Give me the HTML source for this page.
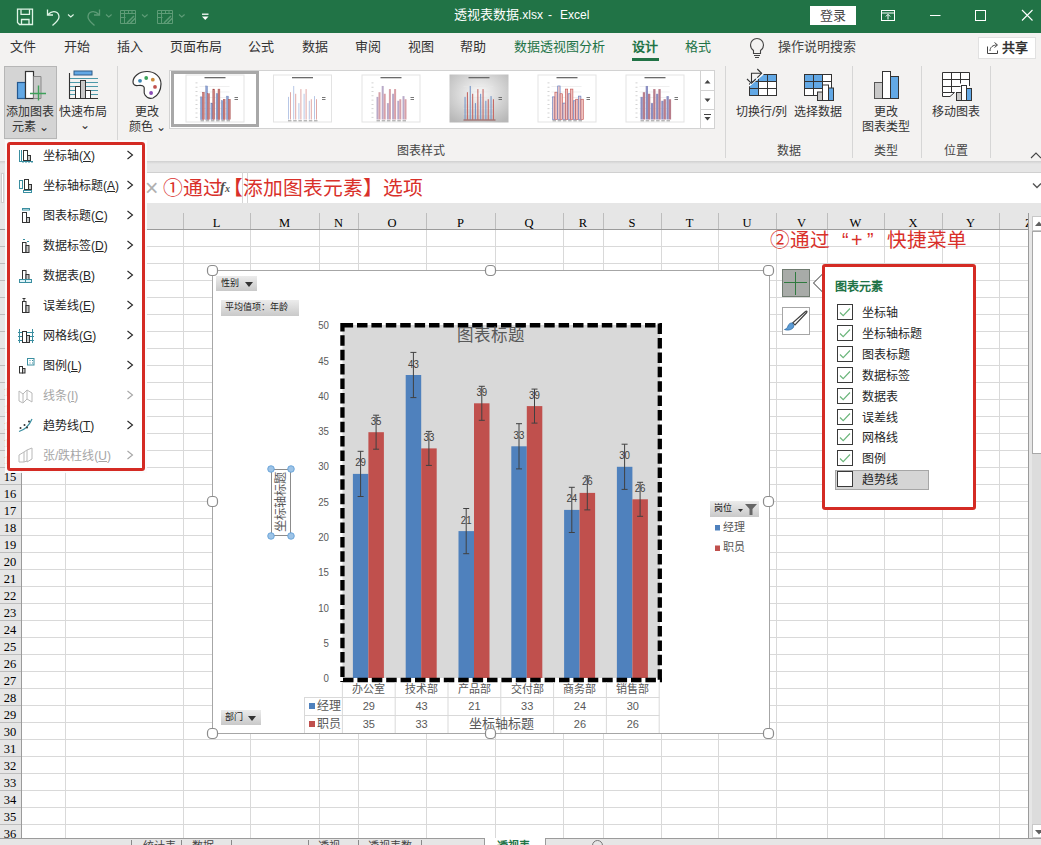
<!DOCTYPE html><html lang="zh-CN"><head><meta charset="utf-8"><style>
*{margin:0;padding:0;box-sizing:border-box}
body{width:1041px;height:845px;overflow:hidden;position:relative;background:#fff;font-family:"Liberation Sans",sans-serif;color:#262626}
.ab{position:absolute}
.t{position:absolute;white-space:nowrap;line-height:1}
</style></head><body>
<div class="ab" style="left:0;top:0;width:1041px;height:33px;background:#217346"></div>
<div class="t" style="left:454px;top:8px;font-size:13px;color:#fff">透视表数据<span style="font-size:12px">.xlsx</span></div>
<div class="t" style="left:548px;top:9px;font-size:12px;color:#fff">-</div>
<div class="t" style="left:560px;top:9px;font-size:12px;color:#fff">Excel</div>
<div class="ab" style="left:810px;top:6px;width:46px;height:19px;background:#fff"></div>
<div class="t" style="left:820px;top:9px;font-size:13px;color:#444">登录</div>
<div class="ab" style="left:0;top:33px;width:1041px;height:128px;background:#f3f2f1"></div>
<div class="t" style="left:10px;top:40px;font-size:13px;color:#333">文件</div>
<div class="t" style="left:64px;top:40px;font-size:13px;color:#333">开始</div>
<div class="t" style="left:117px;top:40px;font-size:13px;color:#333">插入</div>
<div class="t" style="left:170px;top:40px;font-size:13px;color:#333">页面布局</div>
<div class="t" style="left:248px;top:40px;font-size:13px;color:#333">公式</div>
<div class="t" style="left:302px;top:40px;font-size:13px;color:#333">数据</div>
<div class="t" style="left:355px;top:40px;font-size:13px;color:#333">审阅</div>
<div class="t" style="left:408px;top:40px;font-size:13px;color:#333">视图</div>
<div class="t" style="left:460px;top:40px;font-size:13px;color:#333">帮助</div>
<div class="t" style="left:514px;top:40px;font-size:13px;color:#217346">数据透视图分析</div>
<div class="t" style="left:632px;top:40px;font-size:13px;color:#217346;font-weight:bold">设计</div>
<div class="ab" style="left:632px;top:58px;width:27px;height:3px;background:#217346"></div>
<div class="t" style="left:685px;top:40px;font-size:13px;color:#217346">格式</div>
<div class="t" style="left:778px;top:40px;font-size:13px;color:#444">操作说明搜索</div>
<div class="ab" style="left:978px;top:37px;width:58px;height:22px;background:#fff;border:1px solid #e1e1e1"></div>
<div class="t" style="left:1002px;top:41px;font-size:13px;color:#333;font-weight:bold">共享</div>
<div class="ab" style="left:4px;top:66px;width:53px;height:73px;background:#d4d4d4;border:1px solid #b6b6b6"></div>
<div class="t" style="left:6px;top:106px;font-size:12px;color:#333">添加图表</div>
<div class="t" style="left:12px;top:121px;font-size:12px;color:#333">元素 ⌄</div>
<div class="t" style="left:59px;top:106px;font-size:12px;color:#333">快速布局</div>
<div class="t" style="left:80px;top:119px;font-size:12px;color:#333">⌄</div>
<div class="ab" style="left:117px;top:66px;width:1px;height:92px;background:#d6d6d6"></div>
<div class="t" style="left:135px;top:106px;font-size:12px;color:#333">更改</div>
<div class="t" style="left:129px;top:121px;font-size:12px;color:#333">颜色 ⌄</div>
<div class="ab" style="left:169px;top:70px;width:546px;height:59px;background:#fff;border:1px solid #d2d2d2"></div>
<div class="ab" style="left:171px;top:71px;width:88px;height:56px;border:3px solid #a8a8a8;background:#fff"></div>
<div class="t" style="left:397px;top:145px;font-size:12px;color:#444">图表样式</div>
<div class="ab" style="left:725px;top:66px;width:1px;height:92px;background:#d6d6d6"></div>
<div class="t" style="left:736px;top:106px;font-size:12px;color:#333">切换行/列</div>
<div class="t" style="left:794px;top:106px;font-size:12px;color:#333">选择数据</div>
<div class="t" style="left:777px;top:145px;font-size:12px;color:#444">数据</div>
<div class="ab" style="left:852px;top:66px;width:1px;height:92px;background:#d6d6d6"></div>
<div class="t" style="left:874px;top:106px;font-size:12px;color:#333">更改</div>
<div class="t" style="left:862px;top:121px;font-size:12px;color:#333">图表类型</div>
<div class="t" style="left:874px;top:145px;font-size:12px;color:#444">类型</div>
<div class="ab" style="left:921px;top:66px;width:1px;height:92px;background:#d6d6d6"></div>
<div class="t" style="left:932px;top:106px;font-size:12px;color:#333">移动图表</div>
<div class="t" style="left:944px;top:145px;font-size:12px;color:#444">位置</div>
<div class="ab" style="left:990px;top:66px;width:1px;height:92px;background:#d6d6d6"></div>
<svg class="ab" style="left:0;top:0" width="220" height="32" fill="none" stroke-width="1.3"><path d="M17.5 9.2h15v15.3h-13l-2-2z" stroke="#dff5e6"/><path d="M21 9.5v4.8h8.5V9.5M21.5 24.5v-5h7.5v5" stroke="#dff5e6"/><path d="M48 14.5c5-5 11-3 11 2.5 0 3-3 5.5-6.5 8.5" stroke="#dff5e6"/><path d="M47.5 9.5v5.5h5.5" stroke="#dff5e6"/><path d="M68 14.5l2.8 2.5 2.8-2.5" stroke="#dff5e6" stroke-width="1.1"/><path d="M99 14.5c-5-5-11-3-11 2.5 0 3 3 5.5 6.5 8.5" stroke="#5e9c77"/><path d="M99.5 9.5v5.5h-5.5" stroke="#5e9c77"/><path d="M106 14.5l2.8 2.5 2.8-2.5" stroke="#5e9c77" stroke-width="1.1"/><path d="M120.5 10.5h15v13h-15zM120.5 13.5h15M120.5 17.5h5M124.5 10.5v13M128.5 10.5v3M132 10.5v3" stroke="#5e9c77" stroke-width="1"/><path d="M127 23l7-7M130.5 23l5-5" stroke="#5e9c77" stroke-width="1.5"/><path d="M142 14.5l2.8 2.5 2.8-2.5" stroke="#5e9c77" stroke-width="1.1"/><path d="M157.5 10.5h15v13h-15zM157.5 13.5h15M157.5 17.5h5M161.5 10.5v13M165.5 10.5v3M169 10.5v3" stroke="#5e9c77" stroke-width="1"/><path d="M164 23l7-7M167.5 23l5-5" stroke="#5e9c77" stroke-width="1.5"/><path d="M179 14.5l2.8 2.5 2.8-2.5" stroke="#5e9c77" stroke-width="1.1"/><path d="M202 14.2h6.5" stroke="#fff" stroke-width="1.3"/><path d="M202 16.5h6.5l-3.25 3.5z" fill="#fff" stroke="none"/></svg>
<svg class="ab" style="left:860px;top:0" width="181" height="32" fill="none" stroke="#fff" stroke-width="1"><rect x="21.5" y="10.5" width="13" height="10"/><path d="M21.5 13h13M28 19.5v-5M25.8 16.5l2.2-2.2 2.2 2.2"/><path d="M70 15.5h10.5"/><rect x="115.5" y="10.5" width="10" height="10"/><path d="M162 10l10.5 10.5M172.5 10L162 20.5" stroke-width="1.1"/></svg>
<svg class="ab" style="left:748px;top:37px" width="18" height="22" fill="none" stroke="#444" stroke-width="1.1"><path d="M5.5 13.5c-1.8-1.3-3-3.2-3-5.5a6.5 6.5 0 0 1 13 0c0 2.3-1.2 4.2-3 5.5v3h-7z"/><path d="M6 18.5h6M7 20.5h4"/></svg>
<svg class="ab" style="left:985px;top:40px" width="16" height="16" fill="none" stroke="#444" stroke-width="1"><path d="M2.5 6.5v7h10v-3"/><path d="M5 11c0-4 3-6 7-6M9.5 2.5l3 2.5-3 2.5"/></svg>
<svg class="ab" style="left:0;top:0" width="1041" height="161" stroke-width="1"><rect x="17.5" y="82.5" width="8" height="16" fill="#62a8e5" stroke="#24588f" stroke-width="1.2"/><rect x="25.5" y="71.5" width="8" height="27" fill="#fff" stroke="#333" stroke-width="1.2"/><path d="M33.5 76.5h7.5v22h-7.5" fill="#c8c8c8" stroke="#8a8a8a"/><path d="M30 93.5h16M38.5 85.5v15" stroke="#3da05a" stroke-width="1.4"/><rect x="74" y="71" width="18" height="4" fill="#62a8e5" stroke="#2d5b88"/><path d="M70 78.5h28" stroke="#3a8ea0" stroke-width=".9"/><path d="M70 82.5h28" stroke="#3a8ea0" stroke-width=".9"/><path d="M70 86.5h28" stroke="#3a8ea0" stroke-width=".9"/><path d="M70 90.5h28" stroke="#3a8ea0" stroke-width=".9"/><path d="M70 94.5h28" stroke="#3a8ea0" stroke-width=".9"/><rect x="75.5" y="86.5" width="5" height="12" fill="#fff" stroke="#333"/><rect x="80.5" y="80.5" width="5" height="18" fill="#c8c8c8" stroke="#333"/><rect x="85.5" y="90.5" width="5" height="8" fill="#fff" stroke="#333"/><path d="M69.5 73v25.5h28.5" stroke="#333" stroke-width="1.1" fill="none"/><path d="M147 71.5c-8 0-14 5-14 10.5 0 3 2.5 4 5 3.5 3-.5 5-.5 6 1.5s-1 5 1 8 5 4 8 3c5-2 8-8 8-14 0-7-6-12.5-14-12.5z" fill="#fff" stroke="#333" stroke-width="1.2"/><circle cx="140" cy="80.8" r="1.9" fill="#3b86b0"/><circle cx="146.2" cy="78" r="1.9" fill="#3aa35a"/><circle cx="152.8" cy="79.7" r="1.9" fill="#c98a3b"/><circle cx="155" cy="86.9" r="1.9" fill="#c0504d"/><circle cx="151.1" cy="93" r="1.9" fill="#8a4db5"/><path d="M700.5 70v58.5M700.5 90.5h14M700.5 109.5h14" stroke="#d2d2d2"/><path d="M704.5 83.5l3-3.5 3 3.5z" fill="#444"/><path d="M704.5 98.5l3 3.5 3-3.5z" fill="#444"/><path d="M704 114.5h7" stroke="#444"/><path d="M704.5 117l3 3.5 3-3.5z" fill="#444"/><rect x="186.0" y="75.0" width="58" height="47" fill="#fff" stroke="#e3e3e3"/><rect x="204.5" y="77.0" width="21" height="1.3" fill="#6a6a6a"/><line x1="199.5" y1="86.5" x2="229.5" y2="86.5" stroke="#e6e6e6" stroke-width=".6"/><line x1="199.5" y1="92.0" x2="229.5" y2="92.0" stroke="#e6e6e6" stroke-width=".6"/><line x1="199.5" y1="97.5" x2="229.5" y2="97.5" stroke="#e6e6e6" stroke-width=".6"/><line x1="199.5" y1="103.0" x2="229.5" y2="103.0" stroke="#e6e6e6" stroke-width=".6"/><line x1="199.5" y1="108.5" x2="229.5" y2="108.5" stroke="#e6e6e6" stroke-width=".6"/><line x1="199.5" y1="114.0" x2="229.5" y2="114.0" stroke="#e6e6e6" stroke-width=".6"/><rect x="195.5" y="82.5" width="2" height=".8" fill="#c8c8c8"/><rect x="195.5" y="86.8" width="2" height=".8" fill="#c8c8c8"/><rect x="195.5" y="91.1" width="2" height=".8" fill="#c8c8c8"/><rect x="195.5" y="95.4" width="2" height=".8" fill="#c8c8c8"/><rect x="195.5" y="99.7" width="2" height=".8" fill="#c8c8c8"/><rect x="195.5" y="104.0" width="2" height=".8" fill="#c8c8c8"/><rect x="195.5" y="108.3" width="2" height=".8" fill="#c8c8c8"/><rect x="195.5" y="112.6" width="2" height=".8" fill="#c8c8c8"/><rect x="195.5" y="116.9" width="2" height=".8" fill="#c8c8c8"/><rect x="234.5" y="97.0" width="3.5" height=".8" fill="#555"/><rect x="234.5" y="99.0" width="3.5" height=".8" fill="#555"/><rect x="200.5" y="96.88" width="1.9" height="22.62" fill="#8ea4d2" stroke="#6f82b8" stroke-width=".4"/><rect x="202.4" y="92.2" width="1.9" height="27.3" fill="#c97d7b" stroke="#a94f4d" stroke-width=".4"/><rect x="205.7" y="85.96000000000001" width="1.9" height="33.54" fill="#8ea4d2" stroke="#6f82b8" stroke-width=".4"/><rect x="207.6" y="93.75999999999999" width="1.9" height="25.740000000000002" fill="#c97d7b" stroke="#a94f4d" stroke-width=".4"/><rect x="210.9" y="103.12" width="1.9" height="16.38" fill="#8ea4d2" stroke="#6f82b8" stroke-width=".4"/><rect x="212.8" y="89.08" width="1.9" height="30.42" fill="#c97d7b" stroke="#a94f4d" stroke-width=".4"/><rect x="216.1" y="93.75999999999999" width="1.9" height="25.740000000000002" fill="#8ea4d2" stroke="#6f82b8" stroke-width=".4"/><rect x="218.0" y="89.08" width="1.9" height="30.42" fill="#c97d7b" stroke="#a94f4d" stroke-width=".4"/><rect x="221.3" y="100.78" width="1.9" height="18.72" fill="#8ea4d2" stroke="#6f82b8" stroke-width=".4"/><rect x="223.20000000000002" y="99.22" width="1.9" height="20.28" fill="#c97d7b" stroke="#a94f4d" stroke-width=".4"/><rect x="226.5" y="96.1" width="1.9" height="23.400000000000002" fill="#8ea4d2" stroke="#6f82b8" stroke-width=".4"/><rect x="228.4" y="99.22" width="1.9" height="20.28" fill="#c97d7b" stroke="#a94f4d" stroke-width=".4"/><rect x="200.5" y="120.3" width="3.5" height="1" fill="#9a9a9a"/><rect x="205.7" y="120.3" width="3.5" height="1" fill="#9a9a9a"/><rect x="210.9" y="120.3" width="3.5" height="1" fill="#9a9a9a"/><rect x="216.1" y="120.3" width="3.5" height="1" fill="#9a9a9a"/><rect x="221.3" y="120.3" width="3.5" height="1" fill="#9a9a9a"/><rect x="226.5" y="120.3" width="3.5" height="1" fill="#9a9a9a"/><rect x="273.5" y="75.0" width="58" height="47" fill="#fff" stroke="#e3e3e3"/><rect x="292" y="77.0" width="21" height="1.3" fill="#6a6a6a"/><rect x="322" y="97.0" width="3.5" height=".8" fill="#555"/><rect x="322" y="99.0" width="3.5" height=".8" fill="#555"/><rect x="288.0" y="96.88" width="1.0" height="22.62" fill="#b7c7e6"/><rect x="290.0" y="92.2" width="1.0" height="27.3" fill="#e0a8a6"/><rect x="293.2" y="85.96000000000001" width="1.0" height="33.54" fill="#b7c7e6"/><rect x="295.2" y="93.75999999999999" width="1.0" height="25.740000000000002" fill="#e0a8a6"/><rect x="298.4" y="103.12" width="1.0" height="16.38" fill="#b7c7e6"/><rect x="300.4" y="89.08" width="1.0" height="30.42" fill="#e0a8a6"/><rect x="303.6" y="93.75999999999999" width="1.0" height="25.740000000000002" fill="#b7c7e6"/><rect x="305.6" y="89.08" width="1.0" height="30.42" fill="#e0a8a6"/><rect x="308.8" y="100.78" width="1.0" height="18.72" fill="#b7c7e6"/><rect x="310.8" y="99.22" width="1.0" height="20.28" fill="#e0a8a6"/><rect x="314.0" y="96.1" width="1.0" height="23.400000000000002" fill="#b7c7e6"/><rect x="316.0" y="99.22" width="1.0" height="20.28" fill="#e0a8a6"/><rect x="288.0" y="120.3" width="3.5" height="1" fill="#9a9a9a"/><rect x="293.2" y="120.3" width="3.5" height="1" fill="#9a9a9a"/><rect x="298.4" y="120.3" width="3.5" height="1" fill="#9a9a9a"/><rect x="303.6" y="120.3" width="3.5" height="1" fill="#9a9a9a"/><rect x="308.8" y="120.3" width="3.5" height="1" fill="#9a9a9a"/><rect x="314.0" y="120.3" width="3.5" height="1" fill="#9a9a9a"/><rect x="362.0" y="75.0" width="58" height="47" fill="#fff" stroke="#e3e3e3"/><rect x="380.5" y="77.0" width="21" height="1.3" fill="#6a6a6a"/><rect x="371.5" y="82.5" width="2" height=".8" fill="#c8c8c8"/><rect x="371.5" y="86.8" width="2" height=".8" fill="#c8c8c8"/><rect x="371.5" y="91.1" width="2" height=".8" fill="#c8c8c8"/><rect x="371.5" y="95.4" width="2" height=".8" fill="#c8c8c8"/><rect x="371.5" y="99.7" width="2" height=".8" fill="#c8c8c8"/><rect x="371.5" y="104.0" width="2" height=".8" fill="#c8c8c8"/><rect x="371.5" y="108.3" width="2" height=".8" fill="#c8c8c8"/><rect x="371.5" y="112.6" width="2" height=".8" fill="#c8c8c8"/><rect x="371.5" y="116.9" width="2" height=".8" fill="#c8c8c8"/><rect x="410.5" y="97.0" width="3.5" height=".8" fill="#555"/><rect x="410.5" y="99.0" width="3.5" height=".8" fill="#555"/><rect x="376.5" y="96.88" width="2.0" height="22.62" fill="#b9aac8"/><rect x="378.5" y="92.2" width="2.0" height="27.3" fill="#d8a0a8"/><rect x="381.7" y="85.96000000000001" width="2.0" height="33.54" fill="#b9aac8"/><rect x="383.7" y="93.75999999999999" width="2.0" height="25.740000000000002" fill="#d8a0a8"/><rect x="386.9" y="103.12" width="2.0" height="16.38" fill="#b9aac8"/><rect x="388.9" y="89.08" width="2.0" height="30.42" fill="#d8a0a8"/><rect x="392.1" y="93.75999999999999" width="2.0" height="25.740000000000002" fill="#b9aac8"/><rect x="394.1" y="89.08" width="2.0" height="30.42" fill="#d8a0a8"/><rect x="397.3" y="100.78" width="2.0" height="18.72" fill="#b9aac8"/><rect x="399.3" y="99.22" width="2.0" height="20.28" fill="#d8a0a8"/><rect x="402.5" y="96.1" width="2.0" height="23.400000000000002" fill="#b9aac8"/><rect x="404.5" y="99.22" width="2.0" height="20.28" fill="#d8a0a8"/><rect x="376.5" y="120.3" width="3.5" height="1" fill="#9a9a9a"/><rect x="381.7" y="120.3" width="3.5" height="1" fill="#9a9a9a"/><rect x="386.9" y="120.3" width="3.5" height="1" fill="#9a9a9a"/><rect x="392.1" y="120.3" width="3.5" height="1" fill="#9a9a9a"/><rect x="397.3" y="120.3" width="3.5" height="1" fill="#9a9a9a"/><rect x="402.5" y="120.3" width="3.5" height="1" fill="#9a9a9a"/><defs><radialGradient id="g4" cx="50%" cy="40%" r="70%"><stop offset="0" stop-color="#fafafa"/><stop offset="1" stop-color="#b8b8b8"/></radialGradient></defs><rect x="449.5" y="74.5" width="59" height="48" fill="url(#g4)"/><rect x="468.5" y="77.0" width="21" height="1.3" fill="#6a6a6a"/><line x1="463.5" y1="86.5" x2="493.5" y2="86.5" stroke="#e6e6e6" stroke-width=".6"/><line x1="463.5" y1="92.0" x2="493.5" y2="92.0" stroke="#e6e6e6" stroke-width=".6"/><line x1="463.5" y1="97.5" x2="493.5" y2="97.5" stroke="#e6e6e6" stroke-width=".6"/><line x1="463.5" y1="103.0" x2="493.5" y2="103.0" stroke="#e6e6e6" stroke-width=".6"/><line x1="463.5" y1="108.5" x2="493.5" y2="108.5" stroke="#e6e6e6" stroke-width=".6"/><line x1="463.5" y1="114.0" x2="493.5" y2="114.0" stroke="#e6e6e6" stroke-width=".6"/><rect x="498.5" y="97.0" width="3.5" height=".8" fill="#555"/><rect x="498.5" y="99.0" width="3.5" height=".8" fill="#555"/><rect x="464.5" y="96.88" width="1.1" height="22.62" fill="#7897c8"/><rect x="466.9" y="92.2" width="1.1" height="27.3" fill="#c66a66"/><rect x="469.7" y="85.96000000000001" width="1.1" height="33.54" fill="#7897c8"/><rect x="472.09999999999997" y="93.75999999999999" width="1.1" height="25.740000000000002" fill="#c66a66"/><rect x="474.9" y="103.12" width="1.1" height="16.38" fill="#7897c8"/><rect x="477.29999999999995" y="89.08" width="1.1" height="30.42" fill="#c66a66"/><rect x="480.1" y="93.75999999999999" width="1.1" height="25.740000000000002" fill="#7897c8"/><rect x="482.5" y="89.08" width="1.1" height="30.42" fill="#c66a66"/><rect x="485.3" y="100.78" width="1.1" height="18.72" fill="#7897c8"/><rect x="487.7" y="99.22" width="1.1" height="20.28" fill="#c66a66"/><rect x="490.5" y="96.1" width="1.1" height="23.400000000000002" fill="#7897c8"/><rect x="492.9" y="99.22" width="1.1" height="20.28" fill="#c66a66"/><line x1="463.5" y1="120.0" x2="495.5" y2="120.0" stroke="#8b3a38" stroke-width=".8"/><rect x="538.0" y="75.0" width="58" height="47" fill="#fff" stroke="#e3e3e3"/><rect x="556.5" y="77.0" width="21" height="1.3" fill="#6a6a6a"/><line x1="551.5" y1="86.5" x2="581.5" y2="86.5" stroke="#e6e6e6" stroke-width=".6"/><line x1="551.5" y1="92.0" x2="581.5" y2="92.0" stroke="#e6e6e6" stroke-width=".6"/><line x1="551.5" y1="97.5" x2="581.5" y2="97.5" stroke="#e6e6e6" stroke-width=".6"/><line x1="551.5" y1="103.0" x2="581.5" y2="103.0" stroke="#e6e6e6" stroke-width=".6"/><line x1="551.5" y1="108.5" x2="581.5" y2="108.5" stroke="#e6e6e6" stroke-width=".6"/><line x1="551.5" y1="114.0" x2="581.5" y2="114.0" stroke="#e6e6e6" stroke-width=".6"/><rect x="547.5" y="82.5" width="2" height=".8" fill="#c8c8c8"/><rect x="547.5" y="86.8" width="2" height=".8" fill="#c8c8c8"/><rect x="547.5" y="91.1" width="2" height=".8" fill="#c8c8c8"/><rect x="547.5" y="95.4" width="2" height=".8" fill="#c8c8c8"/><rect x="547.5" y="99.7" width="2" height=".8" fill="#c8c8c8"/><rect x="547.5" y="104.0" width="2" height=".8" fill="#c8c8c8"/><rect x="547.5" y="108.3" width="2" height=".8" fill="#c8c8c8"/><rect x="547.5" y="112.6" width="2" height=".8" fill="#c8c8c8"/><rect x="547.5" y="116.9" width="2" height=".8" fill="#c8c8c8"/><rect x="586.5" y="97.0" width="3.5" height=".8" fill="#555"/><rect x="586.5" y="99.0" width="3.5" height=".8" fill="#555"/><rect x="552.5" y="96.88" width="2.4" height="22.62" fill="#e8c6c8" stroke="#5b79c0" stroke-width=".6"/><rect x="554.9" y="92.2" width="2.4" height="27.3" fill="#efc2c0" stroke="#c0504d" stroke-width=".6"/><rect x="557.7" y="85.96000000000001" width="2.4" height="33.54" fill="#e8c6c8" stroke="#5b79c0" stroke-width=".6"/><rect x="560.1" y="93.75999999999999" width="2.4" height="25.740000000000002" fill="#efc2c0" stroke="#c0504d" stroke-width=".6"/><rect x="562.9" y="103.12" width="2.4" height="16.38" fill="#e8c6c8" stroke="#5b79c0" stroke-width=".6"/><rect x="565.3" y="89.08" width="2.4" height="30.42" fill="#efc2c0" stroke="#c0504d" stroke-width=".6"/><rect x="568.1" y="93.75999999999999" width="2.4" height="25.740000000000002" fill="#e8c6c8" stroke="#5b79c0" stroke-width=".6"/><rect x="570.5" y="89.08" width="2.4" height="30.42" fill="#efc2c0" stroke="#c0504d" stroke-width=".6"/><rect x="573.3" y="100.78" width="2.4" height="18.72" fill="#e8c6c8" stroke="#5b79c0" stroke-width=".6"/><rect x="575.6999999999999" y="99.22" width="2.4" height="20.28" fill="#efc2c0" stroke="#c0504d" stroke-width=".6"/><rect x="578.5" y="96.1" width="2.4" height="23.400000000000002" fill="#e8c6c8" stroke="#5b79c0" stroke-width=".6"/><rect x="580.9" y="99.22" width="2.4" height="20.28" fill="#efc2c0" stroke="#c0504d" stroke-width=".6"/><rect x="552.5" y="120.3" width="3.5" height="1" fill="#9a9a9a"/><rect x="557.7" y="120.3" width="3.5" height="1" fill="#9a9a9a"/><rect x="562.9" y="120.3" width="3.5" height="1" fill="#9a9a9a"/><rect x="568.1" y="120.3" width="3.5" height="1" fill="#9a9a9a"/><rect x="573.3" y="120.3" width="3.5" height="1" fill="#9a9a9a"/><rect x="578.5" y="120.3" width="3.5" height="1" fill="#9a9a9a"/><rect x="626.0" y="75.0" width="58" height="47" fill="#fff" stroke="#e3e3e3"/><rect x="644.5" y="77.0" width="21" height="1.3" fill="#6a6a6a"/><line x1="639.5" y1="86.5" x2="669.5" y2="86.5" stroke="#e6e6e6" stroke-width=".6"/><line x1="639.5" y1="92.0" x2="669.5" y2="92.0" stroke="#e6e6e6" stroke-width=".6"/><line x1="639.5" y1="97.5" x2="669.5" y2="97.5" stroke="#e6e6e6" stroke-width=".6"/><line x1="639.5" y1="103.0" x2="669.5" y2="103.0" stroke="#e6e6e6" stroke-width=".6"/><line x1="639.5" y1="108.5" x2="669.5" y2="108.5" stroke="#e6e6e6" stroke-width=".6"/><line x1="639.5" y1="114.0" x2="669.5" y2="114.0" stroke="#e6e6e6" stroke-width=".6"/><rect x="635.5" y="82.5" width="2" height=".8" fill="#c8c8c8"/><rect x="635.5" y="86.8" width="2" height=".8" fill="#c8c8c8"/><rect x="635.5" y="91.1" width="2" height=".8" fill="#c8c8c8"/><rect x="635.5" y="95.4" width="2" height=".8" fill="#c8c8c8"/><rect x="635.5" y="99.7" width="2" height=".8" fill="#c8c8c8"/><rect x="635.5" y="104.0" width="2" height=".8" fill="#c8c8c8"/><rect x="635.5" y="108.3" width="2" height=".8" fill="#c8c8c8"/><rect x="635.5" y="112.6" width="2" height=".8" fill="#c8c8c8"/><rect x="635.5" y="116.9" width="2" height=".8" fill="#c8c8c8"/><rect x="674.5" y="97.0" width="3.5" height=".8" fill="#555"/><rect x="674.5" y="99.0" width="3.5" height=".8" fill="#555"/><rect x="640.5" y="96.88" width="2.3" height="22.62" fill="#8b8fc2"/><rect x="642.8" y="92.2" width="2.3" height="27.3" fill="#b87d8a"/><rect x="645.7" y="85.96000000000001" width="2.3" height="33.54" fill="#8b8fc2"/><rect x="648.0" y="93.75999999999999" width="2.3" height="25.740000000000002" fill="#b87d8a"/><rect x="650.9" y="103.12" width="2.3" height="16.38" fill="#8b8fc2"/><rect x="653.1999999999999" y="89.08" width="2.3" height="30.42" fill="#b87d8a"/><rect x="656.1" y="93.75999999999999" width="2.3" height="25.740000000000002" fill="#8b8fc2"/><rect x="658.4" y="89.08" width="2.3" height="30.42" fill="#b87d8a"/><rect x="661.3" y="100.78" width="2.3" height="18.72" fill="#8b8fc2"/><rect x="663.5999999999999" y="99.22" width="2.3" height="20.28" fill="#b87d8a"/><rect x="666.5" y="96.1" width="2.3" height="23.400000000000002" fill="#8b8fc2"/><rect x="668.8" y="99.22" width="2.3" height="20.28" fill="#b87d8a"/><rect x="640.5" y="120.3" width="3.5" height="1" fill="#9a9a9a"/><rect x="645.7" y="120.3" width="3.5" height="1" fill="#9a9a9a"/><rect x="650.9" y="120.3" width="3.5" height="1" fill="#9a9a9a"/><rect x="656.1" y="120.3" width="3.5" height="1" fill="#9a9a9a"/><rect x="661.3" y="120.3" width="3.5" height="1" fill="#9a9a9a"/><rect x="666.5" y="120.3" width="3.5" height="1" fill="#9a9a9a"/><rect x="749.5" y="74.5" width="27" height="21" fill="#fff" stroke="#333"/><path d="M749.5 74.5h27v7h-18v14h-9z" fill="#62a8e5" stroke="#333"/><path d="M758.5 74.5v21M767.5 74.5v21M749.5 81.5h27M749.5 88.5h27" stroke="#333"/><path d="M745 73V86.5L764 73z" fill="#f3f2f1"/><path d="M749 86L763.5 73.5" stroke="#fff" stroke-width="1.6"/><path d="M751.5 82.5V73.3h10" fill="none" stroke="#333" stroke-width="1.1"/><path d="M747 79l4.5 4.3 4.3-4.3M757.3 69l4.3 4.3-4.3 4.3" fill="none" stroke="#333" stroke-width="1.1"/><rect x="804.5" y="74.5" width="27" height="21" fill="#fff" stroke="#333"/><rect x="804.5" y="74.5" width="18" height="14" fill="#62a8e5" stroke="#333"/><path d="M813.5 74.5v21M822.5 74.5v21M804.5 81.5h27M804.5 88.5h27" stroke="#333"/><rect x="817.5" y="92" width="5" height="8.5" fill="#c8c8c8" stroke="#333"/><rect x="822.5" y="85" width="6" height="15.5" fill="#fff" stroke="#333"/><rect x="828.5" y="88" width="5" height="12.5" fill="#62a8e5" stroke="#333"/><rect x="874.5" y="82.5" width="8" height="16" fill="#c8c8c8" stroke="#555"/><rect x="882.5" y="71.5" width="8" height="27" fill="#fff" stroke="#333"/><rect x="890.5" y="76.5" width="8" height="22" fill="#62a8e5" stroke="#333"/><rect x="943" y="73" width="26" height="20" fill="#fff"/><path d="M942.5 92.5V72.5h27v13.5" fill="none" stroke="#333"/><path d="M942.5 79.5h27M942.5 86.5h18M951.5 72.5v20M960.5 72.5v11" stroke="#333"/><path d="M942.5 92.5h12l-4.5 4h-7.5z" fill="#fff" stroke="#333"/><rect x="956.5" y="92.5" width="5" height="8" fill="#c8c8c8" stroke="#333"/><rect x="961.5" y="85.5" width="5" height="15" fill="#fff" stroke="#333"/><rect x="966.5" y="88.5" width="5" height="12" fill="#62a8e5" stroke="#333"/><path d="M1031 158l5-5 5 5" fill="none" stroke="#444" stroke-width="1.1"/></svg>
<div class="ab" style="left:0;top:161px;width:1041px;height:42px;background:#e6e6e6"></div>
<div class="ab" style="left:0;top:161px;width:1041px;height:3px;background:linear-gradient(#cfcfcf,#e6e6e6)"></div>
<div class="ab" style="left:0;top:172px;width:1041px;height:32px;background:#fff;border-top:1px solid #d0d0d0;border-bottom:1px solid #c6c6c6"></div>
<div class="ab" style="left:0;top:172px;width:6px;height:31px;background:#e3e3e3"></div>
<div class="ab" style="left:1px;top:173px;width:3px;height:30px;background:#fff;border:1px solid #d0d0d0"></div>
<div class="ab" style="left:242px;top:172px;width:1px;height:31px;background:#d6d6d6"></div>
<div class="ab" style="left:247px;top:172px;width:1px;height:31px;background:#d6d6d6"></div>
<div class="ab" style="left:0;top:203px;width:1041px;height:26px;background:#e6e6e6"></div>
<svg class="ab" style="left:0;top:0" width="1041" height="845"><line x1="22" y1="229.5" x2="1028" y2="229.5" stroke="#d9d9d9"/><line x1="0" y1="229.5" x2="22" y2="229.5" stroke="#bdbdbd"/><line x1="22" y1="246.5" x2="1028" y2="246.5" stroke="#d9d9d9"/><line x1="0" y1="246.5" x2="22" y2="246.5" stroke="#bdbdbd"/><line x1="22" y1="263.5" x2="1028" y2="263.5" stroke="#d9d9d9"/><line x1="0" y1="263.5" x2="22" y2="263.5" stroke="#bdbdbd"/><line x1="22" y1="280.5" x2="1028" y2="280.5" stroke="#d9d9d9"/><line x1="0" y1="280.5" x2="22" y2="280.5" stroke="#bdbdbd"/><line x1="22" y1="297.5" x2="1028" y2="297.5" stroke="#d9d9d9"/><line x1="0" y1="297.5" x2="22" y2="297.5" stroke="#bdbdbd"/><line x1="22" y1="314.5" x2="1028" y2="314.5" stroke="#d9d9d9"/><line x1="0" y1="314.5" x2="22" y2="314.5" stroke="#bdbdbd"/><line x1="22" y1="331.5" x2="1028" y2="331.5" stroke="#d9d9d9"/><line x1="0" y1="331.5" x2="22" y2="331.5" stroke="#bdbdbd"/><line x1="22" y1="348.5" x2="1028" y2="348.5" stroke="#d9d9d9"/><line x1="0" y1="348.5" x2="22" y2="348.5" stroke="#bdbdbd"/><line x1="22" y1="365.5" x2="1028" y2="365.5" stroke="#d9d9d9"/><line x1="0" y1="365.5" x2="22" y2="365.5" stroke="#bdbdbd"/><line x1="22" y1="382.5" x2="1028" y2="382.5" stroke="#d9d9d9"/><line x1="0" y1="382.5" x2="22" y2="382.5" stroke="#bdbdbd"/><line x1="22" y1="399.5" x2="1028" y2="399.5" stroke="#d9d9d9"/><line x1="0" y1="399.5" x2="22" y2="399.5" stroke="#bdbdbd"/><line x1="22" y1="416.5" x2="1028" y2="416.5" stroke="#d9d9d9"/><line x1="0" y1="416.5" x2="22" y2="416.5" stroke="#bdbdbd"/><line x1="22" y1="433.5" x2="1028" y2="433.5" stroke="#d9d9d9"/><line x1="0" y1="433.5" x2="22" y2="433.5" stroke="#bdbdbd"/><line x1="22" y1="450.5" x2="1028" y2="450.5" stroke="#d9d9d9"/><line x1="0" y1="450.5" x2="22" y2="450.5" stroke="#bdbdbd"/><line x1="22" y1="467.5" x2="1028" y2="467.5" stroke="#d9d9d9"/><line x1="0" y1="467.5" x2="22" y2="467.5" stroke="#bdbdbd"/><line x1="22" y1="484.5" x2="1028" y2="484.5" stroke="#d9d9d9"/><line x1="0" y1="484.5" x2="22" y2="484.5" stroke="#bdbdbd"/><line x1="22" y1="501.5" x2="1028" y2="501.5" stroke="#d9d9d9"/><line x1="0" y1="501.5" x2="22" y2="501.5" stroke="#bdbdbd"/><line x1="22" y1="518.5" x2="1028" y2="518.5" stroke="#d9d9d9"/><line x1="0" y1="518.5" x2="22" y2="518.5" stroke="#bdbdbd"/><line x1="22" y1="535.5" x2="1028" y2="535.5" stroke="#d9d9d9"/><line x1="0" y1="535.5" x2="22" y2="535.5" stroke="#bdbdbd"/><line x1="22" y1="552.5" x2="1028" y2="552.5" stroke="#d9d9d9"/><line x1="0" y1="552.5" x2="22" y2="552.5" stroke="#bdbdbd"/><line x1="22" y1="569.5" x2="1028" y2="569.5" stroke="#d9d9d9"/><line x1="0" y1="569.5" x2="22" y2="569.5" stroke="#bdbdbd"/><line x1="22" y1="586.5" x2="1028" y2="586.5" stroke="#d9d9d9"/><line x1="0" y1="586.5" x2="22" y2="586.5" stroke="#bdbdbd"/><line x1="22" y1="603.5" x2="1028" y2="603.5" stroke="#d9d9d9"/><line x1="0" y1="603.5" x2="22" y2="603.5" stroke="#bdbdbd"/><line x1="22" y1="620.5" x2="1028" y2="620.5" stroke="#d9d9d9"/><line x1="0" y1="620.5" x2="22" y2="620.5" stroke="#bdbdbd"/><line x1="22" y1="637.5" x2="1028" y2="637.5" stroke="#d9d9d9"/><line x1="0" y1="637.5" x2="22" y2="637.5" stroke="#bdbdbd"/><line x1="22" y1="654.5" x2="1028" y2="654.5" stroke="#d9d9d9"/><line x1="0" y1="654.5" x2="22" y2="654.5" stroke="#bdbdbd"/><line x1="22" y1="671.5" x2="1028" y2="671.5" stroke="#d9d9d9"/><line x1="0" y1="671.5" x2="22" y2="671.5" stroke="#bdbdbd"/><line x1="22" y1="688.5" x2="1028" y2="688.5" stroke="#d9d9d9"/><line x1="0" y1="688.5" x2="22" y2="688.5" stroke="#bdbdbd"/><line x1="22" y1="705.5" x2="1028" y2="705.5" stroke="#d9d9d9"/><line x1="0" y1="705.5" x2="22" y2="705.5" stroke="#bdbdbd"/><line x1="22" y1="722.5" x2="1028" y2="722.5" stroke="#d9d9d9"/><line x1="0" y1="722.5" x2="22" y2="722.5" stroke="#bdbdbd"/><line x1="22" y1="739.5" x2="1028" y2="739.5" stroke="#d9d9d9"/><line x1="0" y1="739.5" x2="22" y2="739.5" stroke="#bdbdbd"/><line x1="22" y1="756.5" x2="1028" y2="756.5" stroke="#d9d9d9"/><line x1="0" y1="756.5" x2="22" y2="756.5" stroke="#bdbdbd"/><line x1="22" y1="773.5" x2="1028" y2="773.5" stroke="#d9d9d9"/><line x1="0" y1="773.5" x2="22" y2="773.5" stroke="#bdbdbd"/><line x1="22" y1="790.5" x2="1028" y2="790.5" stroke="#d9d9d9"/><line x1="0" y1="790.5" x2="22" y2="790.5" stroke="#bdbdbd"/><line x1="22" y1="807.5" x2="1028" y2="807.5" stroke="#d9d9d9"/><line x1="0" y1="807.5" x2="22" y2="807.5" stroke="#bdbdbd"/><line x1="22" y1="824.5" x2="1028" y2="824.5" stroke="#d9d9d9"/><line x1="0" y1="824.5" x2="22" y2="824.5" stroke="#bdbdbd"/><line x1="22" y1="841.5" x2="1028" y2="841.5" stroke="#d9d9d9"/><line x1="0" y1="841.5" x2="22" y2="841.5" stroke="#bdbdbd"/><line x1="65.5" y1="229" x2="65.5" y2="838" stroke="#d9d9d9"/><line x1="65.5" y1="213" x2="65.5" y2="229" stroke="#bdbdbd"/><line x1="183.5" y1="229" x2="183.5" y2="838" stroke="#d9d9d9"/><line x1="183.5" y1="213" x2="183.5" y2="229" stroke="#bdbdbd"/><line x1="250.5" y1="229" x2="250.5" y2="838" stroke="#d9d9d9"/><line x1="250.5" y1="213" x2="250.5" y2="229" stroke="#bdbdbd"/><line x1="319.5" y1="229" x2="319.5" y2="838" stroke="#d9d9d9"/><line x1="319.5" y1="213" x2="319.5" y2="229" stroke="#bdbdbd"/><line x1="358.5" y1="229" x2="358.5" y2="838" stroke="#d9d9d9"/><line x1="358.5" y1="213" x2="358.5" y2="229" stroke="#bdbdbd"/><line x1="426.5" y1="229" x2="426.5" y2="838" stroke="#d9d9d9"/><line x1="426.5" y1="213" x2="426.5" y2="229" stroke="#bdbdbd"/><line x1="495.5" y1="229" x2="495.5" y2="838" stroke="#d9d9d9"/><line x1="495.5" y1="213" x2="495.5" y2="229" stroke="#bdbdbd"/><line x1="563.5" y1="229" x2="563.5" y2="838" stroke="#d9d9d9"/><line x1="563.5" y1="213" x2="563.5" y2="229" stroke="#bdbdbd"/><line x1="603.5" y1="229" x2="603.5" y2="838" stroke="#d9d9d9"/><line x1="603.5" y1="213" x2="603.5" y2="229" stroke="#bdbdbd"/><line x1="661.5" y1="229" x2="661.5" y2="838" stroke="#d9d9d9"/><line x1="661.5" y1="213" x2="661.5" y2="229" stroke="#bdbdbd"/><line x1="718.5" y1="229" x2="718.5" y2="838" stroke="#d9d9d9"/><line x1="718.5" y1="213" x2="718.5" y2="229" stroke="#bdbdbd"/><line x1="776.5" y1="229" x2="776.5" y2="838" stroke="#d9d9d9"/><line x1="776.5" y1="213" x2="776.5" y2="229" stroke="#bdbdbd"/><line x1="827.5" y1="229" x2="827.5" y2="838" stroke="#d9d9d9"/><line x1="827.5" y1="213" x2="827.5" y2="229" stroke="#bdbdbd"/><line x1="884.5" y1="229" x2="884.5" y2="838" stroke="#d9d9d9"/><line x1="884.5" y1="213" x2="884.5" y2="229" stroke="#bdbdbd"/><line x1="942.5" y1="229" x2="942.5" y2="838" stroke="#d9d9d9"/><line x1="942.5" y1="213" x2="942.5" y2="229" stroke="#bdbdbd"/><line x1="999.5" y1="229" x2="999.5" y2="838" stroke="#d9d9d9"/><line x1="999.5" y1="213" x2="999.5" y2="229" stroke="#bdbdbd"/><line x1="0" y1="229.5" x2="1028" y2="229.5" stroke="#9b9b9b"/><line x1="21.5" y1="213" x2="21.5" y2="838" stroke="#9b9b9b"/><line x1="1028.5" y1="213" x2="1028.5" y2="838" stroke="#9b9b9b"/></svg>
<div class="ab" style="left:0;top:229px;width:22px;height:610px;background:#e6e6e6;z-index:-1"></div>
<div class="ab" style="left:999px;top:212px;width:29px;height:17px;overflow:hidden"><div class="t" style="left:26px;top:5px;font-family:'Liberation Serif',serif;font-size:12.5px;color:#000">Z</div></div>
<div class="t" style="left:22px;width:43px;top:217px;text-align:center;font-family:'Liberation Serif',serif;font-weight:normal;font-size:12.5px;color:#000">J</div>
<div class="t" style="left:65px;width:118px;top:217px;text-align:center;font-family:'Liberation Serif',serif;font-weight:normal;font-size:12.5px;color:#000">K</div>
<div class="t" style="left:183px;width:67px;top:217px;text-align:center;font-family:'Liberation Serif',serif;font-weight:normal;font-size:12.5px;color:#000">L</div>
<div class="t" style="left:250px;width:69px;top:217px;text-align:center;font-family:'Liberation Serif',serif;font-weight:normal;font-size:12.5px;color:#000">M</div>
<div class="t" style="left:319px;width:39px;top:217px;text-align:center;font-family:'Liberation Serif',serif;font-weight:normal;font-size:12.5px;color:#000">N</div>
<div class="t" style="left:358px;width:68px;top:217px;text-align:center;font-family:'Liberation Serif',serif;font-weight:normal;font-size:12.5px;color:#000">O</div>
<div class="t" style="left:426px;width:69px;top:217px;text-align:center;font-family:'Liberation Serif',serif;font-weight:normal;font-size:12.5px;color:#000">P</div>
<div class="t" style="left:495px;width:68px;top:217px;text-align:center;font-family:'Liberation Serif',serif;font-weight:normal;font-size:12.5px;color:#000">Q</div>
<div class="t" style="left:563px;width:40px;top:217px;text-align:center;font-family:'Liberation Serif',serif;font-weight:normal;font-size:12.5px;color:#000">R</div>
<div class="t" style="left:603px;width:58px;top:217px;text-align:center;font-family:'Liberation Serif',serif;font-weight:normal;font-size:12.5px;color:#000">S</div>
<div class="t" style="left:661px;width:57px;top:217px;text-align:center;font-family:'Liberation Serif',serif;font-weight:normal;font-size:12.5px;color:#000">T</div>
<div class="t" style="left:718px;width:58px;top:217px;text-align:center;font-family:'Liberation Serif',serif;font-weight:normal;font-size:12.5px;color:#000">U</div>
<div class="t" style="left:776px;width:51px;top:217px;text-align:center;font-family:'Liberation Serif',serif;font-weight:normal;font-size:12.5px;color:#000">V</div>
<div class="t" style="left:827px;width:57px;top:217px;text-align:center;font-family:'Liberation Serif',serif;font-weight:normal;font-size:12.5px;color:#000">W</div>
<div class="t" style="left:884px;width:58px;top:217px;text-align:center;font-family:'Liberation Serif',serif;font-weight:normal;font-size:12.5px;color:#000">X</div>
<div class="t" style="left:942px;width:57px;top:217px;text-align:center;font-family:'Liberation Serif',serif;font-weight:normal;font-size:12.5px;color:#000">Y</div>
<div class="t" style="left:0;width:20px;text-align:center;top:233px;font-family:'Liberation Serif',serif;font-size:12.5px;color:#000">1</div>
<div class="t" style="left:0;width:20px;text-align:center;top:250px;font-family:'Liberation Serif',serif;font-size:12.5px;color:#000">2</div>
<div class="t" style="left:0;width:20px;text-align:center;top:267px;font-family:'Liberation Serif',serif;font-size:12.5px;color:#000">3</div>
<div class="t" style="left:0;width:20px;text-align:center;top:284px;font-family:'Liberation Serif',serif;font-size:12.5px;color:#000">4</div>
<div class="t" style="left:0;width:20px;text-align:center;top:301px;font-family:'Liberation Serif',serif;font-size:12.5px;color:#000">5</div>
<div class="t" style="left:0;width:20px;text-align:center;top:318px;font-family:'Liberation Serif',serif;font-size:12.5px;color:#000">6</div>
<div class="t" style="left:0;width:20px;text-align:center;top:335px;font-family:'Liberation Serif',serif;font-size:12.5px;color:#000">7</div>
<div class="t" style="left:0;width:20px;text-align:center;top:352px;font-family:'Liberation Serif',serif;font-size:12.5px;color:#000">8</div>
<div class="t" style="left:0;width:20px;text-align:center;top:369px;font-family:'Liberation Serif',serif;font-size:12.5px;color:#000">9</div>
<div class="t" style="left:0;width:20px;text-align:center;top:386px;font-family:'Liberation Serif',serif;font-size:12.5px;color:#000">10</div>
<div class="t" style="left:0;width:20px;text-align:center;top:403px;font-family:'Liberation Serif',serif;font-size:12.5px;color:#000">11</div>
<div class="t" style="left:0;width:20px;text-align:center;top:420px;font-family:'Liberation Serif',serif;font-size:12.5px;color:#000">12</div>
<div class="t" style="left:0;width:20px;text-align:center;top:437px;font-family:'Liberation Serif',serif;font-size:12.5px;color:#000">13</div>
<div class="t" style="left:0;width:20px;text-align:center;top:454px;font-family:'Liberation Serif',serif;font-size:12.5px;color:#000">14</div>
<div class="t" style="left:0;width:20px;text-align:center;top:471px;font-family:'Liberation Serif',serif;font-size:12.5px;color:#000">15</div>
<div class="t" style="left:0;width:20px;text-align:center;top:488px;font-family:'Liberation Serif',serif;font-size:12.5px;color:#000">16</div>
<div class="t" style="left:0;width:20px;text-align:center;top:505px;font-family:'Liberation Serif',serif;font-size:12.5px;color:#000">17</div>
<div class="t" style="left:0;width:20px;text-align:center;top:522px;font-family:'Liberation Serif',serif;font-size:12.5px;color:#000">18</div>
<div class="t" style="left:0;width:20px;text-align:center;top:539px;font-family:'Liberation Serif',serif;font-size:12.5px;color:#000">19</div>
<div class="t" style="left:0;width:20px;text-align:center;top:556px;font-family:'Liberation Serif',serif;font-size:12.5px;color:#000">20</div>
<div class="t" style="left:0;width:20px;text-align:center;top:573px;font-family:'Liberation Serif',serif;font-size:12.5px;color:#000">21</div>
<div class="t" style="left:0;width:20px;text-align:center;top:590px;font-family:'Liberation Serif',serif;font-size:12.5px;color:#000">22</div>
<div class="t" style="left:0;width:20px;text-align:center;top:607px;font-family:'Liberation Serif',serif;font-size:12.5px;color:#000">23</div>
<div class="t" style="left:0;width:20px;text-align:center;top:624px;font-family:'Liberation Serif',serif;font-size:12.5px;color:#000">24</div>
<div class="t" style="left:0;width:20px;text-align:center;top:641px;font-family:'Liberation Serif',serif;font-size:12.5px;color:#000">25</div>
<div class="t" style="left:0;width:20px;text-align:center;top:658px;font-family:'Liberation Serif',serif;font-size:12.5px;color:#000">26</div>
<div class="t" style="left:0;width:20px;text-align:center;top:675px;font-family:'Liberation Serif',serif;font-size:12.5px;color:#000">27</div>
<div class="t" style="left:0;width:20px;text-align:center;top:692px;font-family:'Liberation Serif',serif;font-size:12.5px;color:#000">28</div>
<div class="t" style="left:0;width:20px;text-align:center;top:709px;font-family:'Liberation Serif',serif;font-size:12.5px;color:#000">29</div>
<div class="t" style="left:0;width:20px;text-align:center;top:726px;font-family:'Liberation Serif',serif;font-size:12.5px;color:#000">30</div>
<div class="t" style="left:0;width:20px;text-align:center;top:743px;font-family:'Liberation Serif',serif;font-size:12.5px;color:#000">31</div>
<div class="t" style="left:0;width:20px;text-align:center;top:760px;font-family:'Liberation Serif',serif;font-size:12.5px;color:#000">32</div>
<div class="t" style="left:0;width:20px;text-align:center;top:777px;font-family:'Liberation Serif',serif;font-size:12.5px;color:#000">33</div>
<div class="t" style="left:0;width:20px;text-align:center;top:794px;font-family:'Liberation Serif',serif;font-size:12.5px;color:#000">34</div>
<div class="t" style="left:0;width:20px;text-align:center;top:811px;font-family:'Liberation Serif',serif;font-size:12.5px;color:#000">35</div>
<div class="t" style="left:0;width:20px;text-align:center;top:828px;font-family:'Liberation Serif',serif;font-size:12.5px;color:#000">36</div>
<div class="ab" style="left:1029px;top:203px;width:12px;height:635px;background:#e6e6e6"></div>
<div class="ab" style="left:1032px;top:216px;width:9px;height:622px;background:#dcdcdc"></div>
<div class="ab" style="left:1032px;top:216px;width:9px;height:15px;background:#fff;border:1px solid #c8c8c8;border-right:0"></div>
<div class="ab" style="left:1032px;top:231px;width:9px;height:223px;background:#fff;border:1px solid #a8a8a8;border-right:0"></div>
<div class="ab" style="left:1032px;top:824px;width:9px;height:14px;background:#fff;border:1px solid #c8c8c8;border-right:0"></div>
<div class="ab" style="left:212px;top:270px;width:558px;height:464px;background:#fff;border:1px solid #a6a6a6"></div>
<svg class="ab" style="left:0;top:0" width="1041" height="845"><rect x="342.5" y="325" width="317.5" height="353" fill="#d9d9d9"/><rect x="352.9" y="473.9" width="15.5" height="204.1" fill="#4f81bd"/><rect x="368.4" y="432.2" width="15.5" height="245.8" fill="#c0504d"/><rect x="405.7" y="375.0" width="15.5" height="303.0" fill="#4f81bd"/><rect x="421.2" y="448.4" width="15.5" height="229.6" fill="#c0504d"/><rect x="458.5" y="531.1" width="15.5" height="146.9" fill="#4f81bd"/><rect x="474.0" y="403.3" width="15.5" height="274.7" fill="#c0504d"/><rect x="511.3" y="446.3" width="15.5" height="231.7" fill="#4f81bd"/><rect x="526.8" y="406.1" width="15.5" height="271.9" fill="#c0504d"/><rect x="564.1" y="509.9" width="15.5" height="168.1" fill="#4f81bd"/><rect x="579.6" y="492.9" width="15.5" height="185.1" fill="#c0504d"/><rect x="616.9" y="466.8" width="15.5" height="211.2" fill="#4f81bd"/><rect x="632.4" y="499.3" width="15.5" height="178.7" fill="#c0504d"/><path d="M360.6 451.3V496.5M357.6 451.3H363.6M357.6 496.5H363.6" stroke="#404040" stroke-width="1" fill="none"/><path d="M376.1 415.2V449.2M373.1 415.2H379.1M373.1 449.2H379.1" stroke="#404040" stroke-width="1" fill="none"/><path d="M413.4 352.4V397.6M410.4 352.4H416.4M410.4 397.6H416.4" stroke="#404040" stroke-width="1" fill="none"/><path d="M428.9 431.4V465.4M425.9 431.4H431.9M425.9 465.4H431.9" stroke="#404040" stroke-width="1" fill="none"/><path d="M466.2 508.5V553.7M463.2 508.5H469.2M463.2 553.7H469.2" stroke="#404040" stroke-width="1" fill="none"/><path d="M481.8 386.3V420.3M478.8 386.3H484.8M478.8 420.3H484.8" stroke="#404040" stroke-width="1" fill="none"/><path d="M519.0 423.7V468.9M516.0 423.7H522.0M516.0 468.9H522.0" stroke="#404040" stroke-width="1" fill="none"/><path d="M534.5 389.1V423.1M531.5 389.1H537.5M531.5 423.1H537.5" stroke="#404040" stroke-width="1" fill="none"/><path d="M571.8 487.3V532.5M568.8 487.3H574.8M568.8 532.5H574.8" stroke="#404040" stroke-width="1" fill="none"/><path d="M587.3 475.9V509.9M584.3 475.9H590.3M584.3 509.9H590.3" stroke="#404040" stroke-width="1" fill="none"/><path d="M624.6 444.2V489.4M621.6 444.2H627.6M621.6 489.4H627.6" stroke="#404040" stroke-width="1" fill="none"/><path d="M640.1 482.3V516.3M637.1 482.3H643.1M637.1 516.3H643.1" stroke="#404040" stroke-width="1" fill="none"/><text transform="translate(360.6 466.4) scale(.88 1)" font-size="11" fill="#404040" text-anchor="middle" font-family="Liberation Sans">29</text><text transform="translate(376.1 424.7) scale(.88 1)" font-size="11" fill="#404040" text-anchor="middle" font-family="Liberation Sans">35</text><text transform="translate(413.4 367.5) scale(.88 1)" font-size="11" fill="#404040" text-anchor="middle" font-family="Liberation Sans">43</text><text transform="translate(428.9 440.9) scale(.88 1)" font-size="11" fill="#404040" text-anchor="middle" font-family="Liberation Sans">33</text><text transform="translate(466.2 523.6) scale(.88 1)" font-size="11" fill="#404040" text-anchor="middle" font-family="Liberation Sans">21</text><text transform="translate(481.8 395.8) scale(.88 1)" font-size="11" fill="#404040" text-anchor="middle" font-family="Liberation Sans">39</text><text transform="translate(519.0 438.8) scale(.88 1)" font-size="11" fill="#404040" text-anchor="middle" font-family="Liberation Sans">33</text><text transform="translate(534.5 398.6) scale(.88 1)" font-size="11" fill="#404040" text-anchor="middle" font-family="Liberation Sans">39</text><text transform="translate(571.8 502.4) scale(.88 1)" font-size="11" fill="#404040" text-anchor="middle" font-family="Liberation Sans">24</text><text transform="translate(587.3 485.4) scale(.88 1)" font-size="11" fill="#404040" text-anchor="middle" font-family="Liberation Sans">26</text><text transform="translate(624.6 459.3) scale(.88 1)" font-size="11" fill="#404040" text-anchor="middle" font-family="Liberation Sans">30</text><text transform="translate(640.1 491.8) scale(.88 1)" font-size="11" fill="#404040" text-anchor="middle" font-family="Liberation Sans">26</text><line x1="342.6" y1="325.25" x2="662" y2="325.25" stroke="#000" stroke-width="4.3" stroke-dasharray="10.5 3.9"/><line x1="342.45" y1="323" x2="342.45" y2="682" stroke="#000" stroke-width="4.3" stroke-dasharray="10.5 3.9" stroke-dashoffset="2.1"/><line x1="659.8" y1="323" x2="659.8" y2="682" stroke="#000" stroke-width="4.3" stroke-dasharray="10.5 3.9" stroke-dashoffset="13.8"/><line x1="340.3" y1="680" x2="662" y2="680" stroke="#000" stroke-width="4.3" stroke-dasharray="10.5 3.9" stroke-dashoffset="11.7"/><text transform="translate(329 682.2) scale(.88 1)" font-size="11" fill="#595959" text-anchor="end" font-family="Liberation Sans">0</text><text transform="translate(329 646.9) scale(.88 1)" font-size="11" fill="#595959" text-anchor="end" font-family="Liberation Sans">5</text><text transform="translate(329 611.6) scale(.88 1)" font-size="11" fill="#595959" text-anchor="end" font-family="Liberation Sans">10</text><text transform="translate(329 576.3) scale(.88 1)" font-size="11" fill="#595959" text-anchor="end" font-family="Liberation Sans">15</text><text transform="translate(329 541.0) scale(.88 1)" font-size="11" fill="#595959" text-anchor="end" font-family="Liberation Sans">20</text><text transform="translate(329 505.7) scale(.88 1)" font-size="11" fill="#595959" text-anchor="end" font-family="Liberation Sans">25</text><text transform="translate(329 470.4) scale(.88 1)" font-size="11" fill="#595959" text-anchor="end" font-family="Liberation Sans">30</text><text transform="translate(329 435.1) scale(.88 1)" font-size="11" fill="#595959" text-anchor="end" font-family="Liberation Sans">35</text><text transform="translate(329 399.8) scale(.88 1)" font-size="11" fill="#595959" text-anchor="end" font-family="Liberation Sans">40</text><text transform="translate(329 364.5) scale(.88 1)" font-size="11" fill="#595959" text-anchor="end" font-family="Liberation Sans">45</text><text transform="translate(329 329.2) scale(.88 1)" font-size="11" fill="#595959" text-anchor="end" font-family="Liberation Sans">50</text><line x1="342.4" y1="682" x2="342.4" y2="733" stroke="#d9d9d9"/><line x1="395.2" y1="682" x2="395.2" y2="733" stroke="#d9d9d9"/><line x1="448.0" y1="682" x2="448.0" y2="733" stroke="#d9d9d9"/><line x1="500.8" y1="682" x2="500.8" y2="733" stroke="#d9d9d9"/><line x1="553.6" y1="682" x2="553.6" y2="733" stroke="#d9d9d9"/><line x1="606.4" y1="682" x2="606.4" y2="733" stroke="#d9d9d9"/><line x1="659.2" y1="682" x2="659.2" y2="733" stroke="#d9d9d9"/><line x1="304.5" y1="697.5" x2="659.5" y2="697.5" stroke="#d9d9d9"/><line x1="304.5" y1="715.5" x2="659.5" y2="715.5" stroke="#d9d9d9"/><line x1="304.5" y1="697" x2="304.5" y2="733" stroke="#d9d9d9"/><rect x="309" y="703" width="6" height="6" fill="#4f81bd"/><rect x="309" y="721" width="6" height="6" fill="#c0504d"/></svg>
<div class="t" style="left:342.4px;width:52.8px;top:684px;text-align:center;font-size:11px;color:#595959">办公室</div>
<div class="t" style="left:342.4px;width:52.8px;top:701px;text-align:center;font-size:11px;color:#595959">29</div>
<div class="t" style="left:342.4px;width:52.8px;top:719px;text-align:center;font-size:11px;color:#595959">35</div>
<div class="t" style="left:395.2px;width:52.8px;top:684px;text-align:center;font-size:11px;color:#595959">技术部</div>
<div class="t" style="left:395.2px;width:52.8px;top:701px;text-align:center;font-size:11px;color:#595959">43</div>
<div class="t" style="left:395.2px;width:52.8px;top:719px;text-align:center;font-size:11px;color:#595959">33</div>
<div class="t" style="left:448.0px;width:52.8px;top:684px;text-align:center;font-size:11px;color:#595959">产品部</div>
<div class="t" style="left:448.0px;width:52.8px;top:701px;text-align:center;font-size:11px;color:#595959">21</div>
<div class="t" style="left:500.8px;width:52.8px;top:684px;text-align:center;font-size:11px;color:#595959">交付部</div>
<div class="t" style="left:500.8px;width:52.8px;top:701px;text-align:center;font-size:11px;color:#595959">33</div>
<div class="t" style="left:553.6px;width:52.8px;top:684px;text-align:center;font-size:11px;color:#595959">商务部</div>
<div class="t" style="left:553.6px;width:52.8px;top:701px;text-align:center;font-size:11px;color:#595959">24</div>
<div class="t" style="left:553.6px;width:52.8px;top:719px;text-align:center;font-size:11px;color:#595959">26</div>
<div class="t" style="left:606.4px;width:52.8px;top:684px;text-align:center;font-size:11px;color:#595959">销售部</div>
<div class="t" style="left:606.4px;width:52.8px;top:701px;text-align:center;font-size:11px;color:#595959">30</div>
<div class="t" style="left:606.4px;width:52.8px;top:719px;text-align:center;font-size:11px;color:#595959">26</div>
<div class="t" style="left:317px;top:700px;font-size:12px;color:#595959">经理</div>
<div class="t" style="left:317px;top:718px;font-size:12px;color:#595959">职员</div>
<div class="t" style="left:469px;top:717px;font-size:13px;color:#595959">坐标轴标题</div>
<div class="t" style="left:457px;top:327px;font-size:16.5px;color:#595959">图表标题</div>
<div class="ab" style="left:271px;top:469px;width:20px;height:67px;border:1px solid #8c8c8c"></div>
<div class="t" style="left:248px;top:495px;width:66px;text-align:center;font-size:12.2px;line-height:14px;color:#595959;transform:rotate(-90deg)">坐标轴标题</div>
<div class="ab" style="left:216px;top:276px;width:41px;height:15px;background:linear-gradient(#ececec,#c9c9c9);"></div>
<div class="t" style="left:221px;top:279px;font-size:9px;color:#222">性别</div>
<div class="ab" style="left:245px;top:282px;width:0;height:0;border-left:4px solid transparent;border-right:4px solid transparent;border-top:5px solid #333"></div>
<div class="ab" style="left:221px;top:300px;width:78px;height:16px;background:linear-gradient(#ececec,#c9c9c9);"></div>
<div class="t" style="left:225px;top:303px;font-size:9px;color:#222">平均值项：年龄</div>
<div class="ab" style="left:221px;top:710px;width:40px;height:15px;background:linear-gradient(#ececec,#c9c9c9);"></div>
<div class="t" style="left:225px;top:713px;font-size:9px;color:#222">部门</div>
<div class="ab" style="left:248px;top:716px;width:0;height:0;border-left:4px solid transparent;border-right:4px solid transparent;border-top:5px solid #333"></div>
<div class="ab" style="left:710px;top:501px;width:49px;height:16px;background:linear-gradient(#ececec,#c9c9c9);"></div>
<div class="t" style="left:714px;top:504px;font-size:9px;color:#222">岗位</div>
<svg class="ab" style="left:735px;top:502px" width="24" height="14"><path d="M3 7h5l-2.5 3z" fill="#333"/><path d="M10 2h12l-4.5 5v6h-3V7z" fill="#666"/></svg>
<svg class="ab" style="left:0;top:0" width="1041" height="845"><rect x="715" y="525" width="5" height="5.5" fill="#4f81bd"/><rect x="715" y="545.5" width="5" height="5.5" fill="#c0504d"/></svg>
<div class="t" style="left:723px;top:522px;font-size:11px;color:#595959">经理</div>
<div class="t" style="left:723px;top:542px;font-size:11px;color:#595959">职员</div>
<svg class="ab" style="left:0;top:0" width="1041" height="845"><rect x="207.5" y="265.5" width="10" height="10" rx="4" fill="#fff" stroke="#8c8c8c" stroke-width="1.2"/><rect x="485.5" y="265.5" width="10" height="10" rx="4" fill="#fff" stroke="#8c8c8c" stroke-width="1.2"/><rect x="763.5" y="265.5" width="10" height="10" rx="4" fill="#fff" stroke="#8c8c8c" stroke-width="1.2"/><rect x="207.5" y="496.5" width="10" height="10" rx="4" fill="#fff" stroke="#8c8c8c" stroke-width="1.2"/><rect x="763.5" y="496.5" width="10" height="10" rx="4" fill="#fff" stroke="#8c8c8c" stroke-width="1.2"/><rect x="207.5" y="728.5" width="10" height="10" rx="4" fill="#fff" stroke="#8c8c8c" stroke-width="1.2"/><rect x="485.5" y="728.5" width="10" height="10" rx="4" fill="#fff" stroke="#8c8c8c" stroke-width="1.2"/><rect x="763.5" y="728.5" width="10" height="10" rx="4" fill="#fff" stroke="#8c8c8c" stroke-width="1.2"/><circle cx="271" cy="469" r="3.3" fill="#9dc3e6" stroke="#5b9bd5" stroke-width="0.8"/><circle cx="291" cy="469" r="3.3" fill="#9dc3e6" stroke="#5b9bd5" stroke-width="0.8"/><circle cx="271" cy="536" r="3.3" fill="#9dc3e6" stroke="#5b9bd5" stroke-width="0.8"/><circle cx="291" cy="536" r="3.3" fill="#9dc3e6" stroke="#5b9bd5" stroke-width="0.8"/></svg>
<div class="ab" style="left:5px;top:140px;width:142px;height:333px;background:rgba(252,252,252,.9)"></div>
<div class="ab" style="left:7px;top:142px;width:138px;height:329px;background:#fff;border:3px solid #d42b24;border-radius:3px"></div>
<div class="t" style="left:43px;top:150px;font-size:12px;color:#262626">坐标轴(<u>X</u>)</div>
<svg class="ab" style="left:126px;top:150px" width="8" height="10"><path d="M1.5 1l5 4-5 4" fill="none" stroke="#262626" stroke-width="1.1"/></svg>
<svg class="ab" style="left:17px;top:147px" width="18" height="17"><path d="M4.5 3v11M2.5 3v11" stroke="#3a8ea0"/><rect x="6.5" y="3.5" width="4" height="10" fill="#fff" stroke="#333"/><rect x="10.5" y="8.5" width="3" height="5" fill="#c8c8c8" stroke="#333"/><path d="M2 14.5h14M6 14v2M9 14v2M12 14v2M15 14v2" stroke="#3a8ea0"/></svg>
<div class="t" style="left:43px;top:180px;font-size:12px;color:#262626">坐标轴标题(<u>A</u>)</div>
<svg class="ab" style="left:126px;top:180px" width="8" height="10"><path d="M1.5 1l5 4-5 4" fill="none" stroke="#262626" stroke-width="1.1"/></svg>
<svg class="ab" style="left:17px;top:177px" width="18" height="17"><rect x="2.5" y="3.5" width="3" height="8" fill="#fff" stroke="#3a8ea0"/><rect x="7.5" y="2.5" width="4" height="10" fill="#fff" stroke="#333"/><rect x="11.5" y="7.5" width="3" height="5" fill="#c8c8c8" stroke="#333"/><rect x="6.5" y="13.5" width="8" height="2" fill="#fff" stroke="#3a8ea0"/></svg>
<div class="t" style="left:43px;top:210px;font-size:12px;color:#262626">图表标题(<u>C</u>)</div>
<svg class="ab" style="left:126px;top:210px" width="8" height="10"><path d="M1.5 1l5 4-5 4" fill="none" stroke="#262626" stroke-width="1.1"/></svg>
<svg class="ab" style="left:17px;top:207px" width="18" height="17"><rect x="5.5" y="1.5" width="7" height="1.5" fill="#fff" stroke="#3a8ea0"/><rect x="5.5" y="5.5" width="4" height="10" fill="#fff" stroke="#333"/><rect x="9.5" y="10.5" width="3" height="5" fill="#c8c8c8" stroke="#333"/></svg>
<div class="t" style="left:43px;top:240px;font-size:12px;color:#262626">数据标签(<u>D</u>)</div>
<svg class="ab" style="left:126px;top:240px" width="8" height="10"><path d="M1.5 1l5 4-5 4" fill="none" stroke="#262626" stroke-width="1.1"/></svg>
<svg class="ab" style="left:17px;top:237px" width="18" height="17"><path d="M6 2.5h2M10 4.5h2" stroke="#3a8ea0"/><rect x="5.5" y="5.5" width="3.5" height="10" fill="#fff" stroke="#333"/><rect x="9" y="8.5" width="3" height="7" fill="#c8c8c8" stroke="#333"/></svg>
<div class="t" style="left:43px;top:270px;font-size:12px;color:#262626">数据表(<u>B</u>)</div>
<svg class="ab" style="left:126px;top:270px" width="8" height="10"><path d="M1.5 1l5 4-5 4" fill="none" stroke="#262626" stroke-width="1.1"/></svg>
<svg class="ab" style="left:17px;top:267px" width="18" height="17"><rect x="5.5" y="3.5" width="3.5" height="9" fill="#fff" stroke="#333"/><rect x="9" y="7.5" width="3" height="5" fill="#c8c8c8" stroke="#333"/><rect x="2.5" y="12.5" width="12" height="3" fill="#dff3f8" stroke="#3a8ea0"/><path d="M8.5 12.5v3" stroke="#3a8ea0"/></svg>
<div class="t" style="left:43px;top:300px;font-size:12px;color:#262626">误差线(<u>E</u>)</div>
<svg class="ab" style="left:126px;top:300px" width="8" height="10"><path d="M1.5 1l5 4-5 4" fill="none" stroke="#262626" stroke-width="1.1"/></svg>
<svg class="ab" style="left:17px;top:297px" width="18" height="17"><path d="M7 1.5v3M5.5 1.5h3" stroke="#333"/><rect x="5.5" y="4.5" width="3.5" height="11" fill="#fff" stroke="#333"/><rect x="9" y="8.5" width="3" height="7" fill="#c8c8c8" stroke="#333"/></svg>
<div class="t" style="left:43px;top:330px;font-size:12px;color:#262626">网格线(<u>G</u>)</div>
<svg class="ab" style="left:126px;top:330px" width="8" height="10"><path d="M1.5 1l5 4-5 4" fill="none" stroke="#262626" stroke-width="1.1"/></svg>
<svg class="ab" style="left:17px;top:327px" width="18" height="17"><path d="M1 5.5h16M1 9.5h16M1 13.5h16M2.5 2v14M15.5 2v14" stroke="#3a8ea0"/><rect x="5.5" y="4.5" width="4" height="11" fill="#fff" stroke="#333"/><rect x="9.5" y="8.5" width="3" height="7" fill="#c8c8c8" stroke="#333"/></svg>
<div class="t" style="left:43px;top:360px;font-size:12px;color:#262626">图例(<u>L</u>)</div>
<svg class="ab" style="left:126px;top:360px" width="8" height="10"><path d="M1.5 1l5 4-5 4" fill="none" stroke="#262626" stroke-width="1.1"/></svg>
<svg class="ab" style="left:17px;top:357px" width="18" height="17"><rect x="2.5" y="9.5" width="3" height="6.5" fill="#fff" stroke="#333"/><rect x="5.5" y="11.5" width="2.5" height="4.5" fill="#c8c8c8" stroke="#333"/><rect x="10.5" y="1.5" width="6.5" height="6.5" fill="#fff" stroke="#3a8ea0"/><path d="M12.5 3.5h1M15 3.5h1M12.5 6h1M15 6h1" stroke="#3a8ea0"/></svg>
<div class="t" style="left:43px;top:390px;font-size:12px;color:#a6a6a6">线条(<u>I</u>)</div>
<svg class="ab" style="left:126px;top:390px" width="8" height="10"><path d="M1.5 1l5 4-5 4" fill="none" stroke="#a6a6a6" stroke-width="1.1"/></svg>
<svg class="ab" style="left:17px;top:387px" width="18" height="17"><path d="M2 14V4l4 3 4-4 5 3v9l-5-3-4 4z" fill="none" stroke="#b8b8b8"/><path d="M6 7v8M10 3v9" stroke="#b8b8b8"/></svg>
<div class="t" style="left:43px;top:420px;font-size:12px;color:#262626">趋势线(<u>T</u>)</div>
<svg class="ab" style="left:126px;top:420px" width="8" height="10"><path d="M1.5 1l5 4-5 4" fill="none" stroke="#262626" stroke-width="1.1"/></svg>
<svg class="ab" style="left:17px;top:417px" width="18" height="17"><path d="M2 14.5C7 13 12 9 15 2" stroke="#3a8ea0" stroke-width="1.2" fill="none"/><circle cx="3.5" cy="11" r="1" fill="#333"/><circle cx="7.5" cy="8" r="1" fill="#333"/><circle cx="10" cy="10.5" r="1" fill="#333"/><circle cx="12" cy="4.5" r="1" fill="#333"/></svg>
<div class="t" style="left:43px;top:450px;font-size:12px;color:#a6a6a6">张/跌柱线(<u>U</u>)</div>
<svg class="ab" style="left:126px;top:450px" width="8" height="10"><path d="M1.5 1l5 4-5 4" fill="none" stroke="#a6a6a6" stroke-width="1.1"/></svg>
<svg class="ab" style="left:17px;top:447px" width="18" height="17"><path d="M2 15V8l5-3v10zM10 3l5-2v11l-5 3z" fill="none" stroke="#b8b8b8"/><path d="M7 5l3-2M7 15l3-1" stroke="#b8b8b8"/></svg>
<div class="ab" style="left:782px;top:269px;width:28px;height:28px;background:#a8aba8;border:1px solid #6f7b70"></div>
<div class="ab" style="left:784px;top:282px;width:23px;height:1px;background:#2f7a3f"></div>
<div class="ab" style="left:795px;top:272px;width:1px;height:23px;background:#2f7a3f"></div>
<div class="ab" style="left:782px;top:307px;width:28px;height:28px;background:#fff;border:1px solid #a6a6a6"></div>
<svg class="ab" style="left:782px;top:307px" width="28" height="28"><path d="M23.5 4.5c1-1 2 0 1.2 1L13 18l-2.2-2.2z" fill="#fff" stroke="#404040" stroke-width="1.2"/><path d="M10.5 16c-2-.5-4 1-4.5 3-.5 2-2 3-3.5 3.5 2.5 1 6 .8 8.2-1.2 1.5-1.5 1.2-3.3.2-4.3z" fill="#5b9bd5" stroke="#2e6ca4" stroke-width=".8"/></svg>
<svg class="ab" style="left:812px;top:273px" width="12" height="20"><path d="M10.5 1L1.5 10l9 9" fill="#fff" stroke="#303030" stroke-width="1"/></svg>
<div class="ab" style="left:822px;top:264px;width:154px;height:246px;background:#fff;border:3px solid #d42b24;border-radius:3px"></div>
<div class="t" style="left:835px;top:281px;font-size:12px;color:#217346;font-weight:bold">图表元素</div>
<div class="ab" style="left:837px;top:304.0px;width:16px;height:16px;background:#fff;border:1px solid #3a3a3a"></div>
<svg class="ab" style="left:837px;top:304.0px" width="16" height="16"><path d="M3 8.5l3.2 3.2L13 4.5" fill="none" stroke="#6ab57a" stroke-width="1.15"/></svg>
<div class="t" style="left:862px;top:307.0px;font-size:12px;color:#262626">坐标轴</div>
<div class="ab" style="left:837px;top:324.9px;width:16px;height:16px;background:#fff;border:1px solid #3a3a3a"></div>
<svg class="ab" style="left:837px;top:324.9px" width="16" height="16"><path d="M3 8.5l3.2 3.2L13 4.5" fill="none" stroke="#6ab57a" stroke-width="1.15"/></svg>
<div class="t" style="left:862px;top:327.9px;font-size:12px;color:#262626">坐标轴标题</div>
<div class="ab" style="left:837px;top:345.8px;width:16px;height:16px;background:#fff;border:1px solid #3a3a3a"></div>
<svg class="ab" style="left:837px;top:345.8px" width="16" height="16"><path d="M3 8.5l3.2 3.2L13 4.5" fill="none" stroke="#6ab57a" stroke-width="1.15"/></svg>
<div class="t" style="left:862px;top:348.8px;font-size:12px;color:#262626">图表标题</div>
<div class="ab" style="left:837px;top:366.7px;width:16px;height:16px;background:#fff;border:1px solid #3a3a3a"></div>
<svg class="ab" style="left:837px;top:366.7px" width="16" height="16"><path d="M3 8.5l3.2 3.2L13 4.5" fill="none" stroke="#6ab57a" stroke-width="1.15"/></svg>
<div class="t" style="left:862px;top:369.7px;font-size:12px;color:#262626">数据标签</div>
<div class="ab" style="left:837px;top:387.6px;width:16px;height:16px;background:#fff;border:1px solid #3a3a3a"></div>
<svg class="ab" style="left:837px;top:387.6px" width="16" height="16"><path d="M3 8.5l3.2 3.2L13 4.5" fill="none" stroke="#6ab57a" stroke-width="1.15"/></svg>
<div class="t" style="left:862px;top:390.6px;font-size:12px;color:#262626">数据表</div>
<div class="ab" style="left:837px;top:408.5px;width:16px;height:16px;background:#fff;border:1px solid #3a3a3a"></div>
<svg class="ab" style="left:837px;top:408.5px" width="16" height="16"><path d="M3 8.5l3.2 3.2L13 4.5" fill="none" stroke="#6ab57a" stroke-width="1.15"/></svg>
<div class="t" style="left:862px;top:411.5px;font-size:12px;color:#262626">误差线</div>
<div class="ab" style="left:837px;top:429.4px;width:16px;height:16px;background:#fff;border:1px solid #3a3a3a"></div>
<svg class="ab" style="left:837px;top:429.4px" width="16" height="16"><path d="M3 8.5l3.2 3.2L13 4.5" fill="none" stroke="#6ab57a" stroke-width="1.15"/></svg>
<div class="t" style="left:862px;top:432.4px;font-size:12px;color:#262626">网格线</div>
<div class="ab" style="left:837px;top:450.3px;width:16px;height:16px;background:#fff;border:1px solid #3a3a3a"></div>
<svg class="ab" style="left:837px;top:450.3px" width="16" height="16"><path d="M3 8.5l3.2 3.2L13 4.5" fill="none" stroke="#6ab57a" stroke-width="1.15"/></svg>
<div class="t" style="left:862px;top:453.3px;font-size:12px;color:#262626">图例</div>
<div class="ab" style="left:835px;top:470.2px;width:94px;height:20px;background:#d5d5d5;border:1px solid #a6a6a6"></div>
<div class="ab" style="left:837px;top:471.2px;width:16px;height:16px;background:#fff;border:1px solid #3a3a3a"></div>
<div class="t" style="left:862px;top:474.2px;font-size:12px;color:#262626">趋势线</div>
<div class="t" style="left:163px;top:179px;font-size:19.8px;color:#d9302a">①通过【添加图表元素】选项</div>
<div class="t" style="left:770px;top:231px;font-size:19.6px;color:#d9302a">②通过</div>
<div class="t" style="left:842px;top:231px;font-size:19.6px;color:#d9302a">“</div>
<div class="t" style="left:851px;top:231px;font-size:19.6px;color:#d9302a">+</div>
<div class="t" style="left:867px;top:231px;font-size:19.6px;color:#d9302a">”</div>
<div class="t" style="left:887px;top:231px;font-size:19.6px;color:#d9302a">快捷菜单</div>
<div class="ab" style="left:0;top:838px;width:1041px;height:7px;background:#e6e6e6;border-top:1px solid #9b9b9b"></div>
<div class="ab" style="left:131px;top:840px;width:1px;height:5px;background:#8a8a8a"></div>
<div class="ab" style="left:181px;top:840px;width:1px;height:5px;background:#8a8a8a"></div>
<div class="ab" style="left:231px;top:840px;width:1px;height:5px;background:#8a8a8a"></div>
<div class="ab" style="left:308px;top:840px;width:1px;height:5px;background:#8a8a8a"></div>
<div class="ab" style="left:358px;top:840px;width:1px;height:5px;background:#8a8a8a"></div>
<div class="ab" style="left:421px;top:840px;width:1px;height:5px;background:#8a8a8a"></div>
<div class="ab" style="left:484px;top:838px;width:62px;height:7px;background:#fff;border-left:1px solid #9b9b9b;border-right:1px solid #9b9b9b"></div>
<div class="t" style="left:497px;top:841px;font-size:11px;color:#217346;font-weight:bold">透视表</div>
<div class="t" style="left:143px;top:841px;font-size:11px;color:#444">统计表</div>
<div class="t" style="left:192px;top:841px;font-size:11px;color:#444">数据</div>
<div class="t" style="left:318px;top:841px;font-size:11px;color:#444">透视</div>
<div class="t" style="left:368px;top:841px;font-size:11px;color:#444">透视表数</div>
<div class="ab" style="left:592px;top:840px;width:11px;height:11px;border-radius:50%;border:1px solid #777"></div>
<div class="t" style="left:145px;top:177px;font-size:23px;color:#b0b0b0">×</div>
<div class="t" style="left:220px;top:180px;z-index:5;font-size:15px;font-style:italic;font-weight:bold;font-family:'Liberation Serif',serif;color:#505050">f<span style="font-size:10px">x</span></div>
<svg class="ab" style="left:1031px;top:180px" width="10" height="12"><path d="M2 3.5l4 4 4-4" fill="none" stroke="#555" stroke-width="1.4"/></svg>
<svg class="ab" style="left:1032px;top:216px" width="9" height="625"><path d="M3 10l4-4.5 4 4.5z" fill="#606060"/><path d="M3 614l4 4.5 4-4.5z" fill="#606060"/></svg>
</body></html>
